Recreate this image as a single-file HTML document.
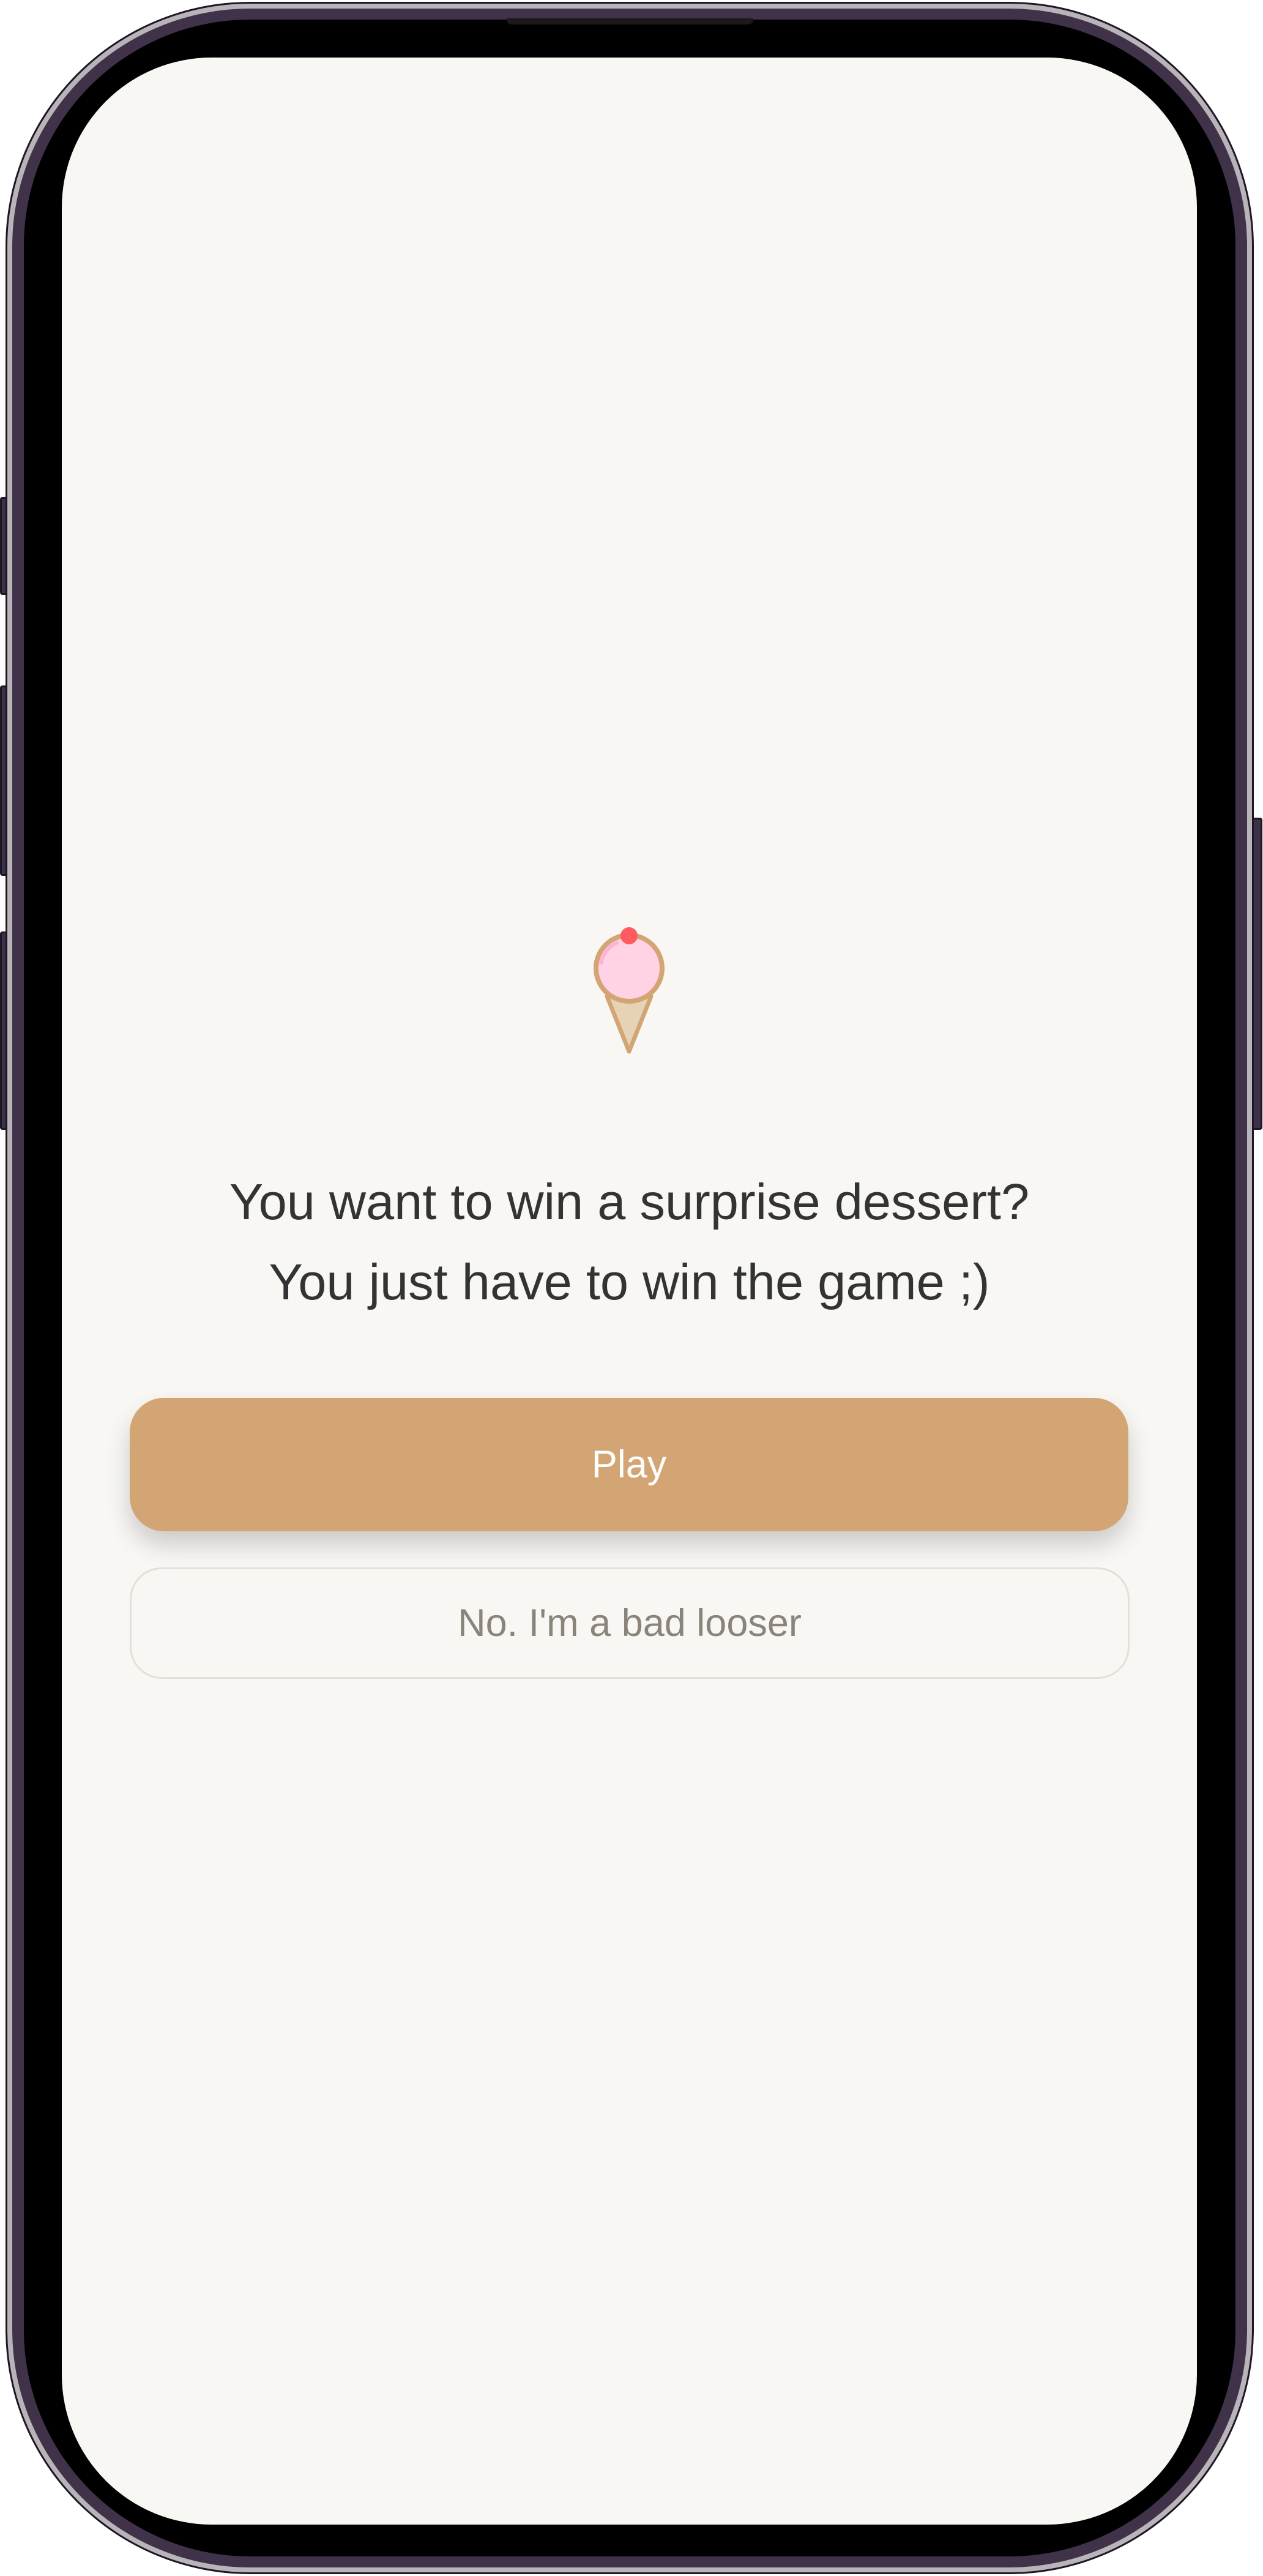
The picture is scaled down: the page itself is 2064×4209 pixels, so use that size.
<!DOCTYPE html>
<html><head><meta charset="utf-8"><style>
html,body{margin:0;padding:0;background:#fff;}
body{width:2064px;height:4209px;position:relative;overflow:hidden;font-family:"Liberation Sans",Arial,sans-serif;}
.btn{position:absolute;background:#3d3148;border:3px solid #1e1626;border-radius:4px;}
.frame{position:absolute;left:9px;top:3px;width:2040px;height:4203px;border-radius:400px;background:#1e1626;}
.hl{position:absolute;left:12px;top:6px;width:2034px;height:4197px;border-radius:397px;background:#b8b4b8;}
.pur{position:absolute;left:20px;top:14px;width:2018px;height:4181px;border-radius:389px;background:#3f3249;}
.bezel{position:absolute;left:39px;top:32px;width:1980px;height:4145px;border-radius:370px;background:#000;}
.screen{position:absolute;left:101px;top:94px;width:1855px;height:4031px;border-radius:245px;background:#f8f7f4;overflow:hidden;}
.notch{position:absolute;left:828px;top:30px;width:403px;height:10px;background:#1a1a1a;border-radius:0 0 8px 8px;}
.t{position:absolute;left:0;width:1855px;text-align:center;color:#333;font-size:83px;}
.play{position:absolute;left:111px;top:2190px;width:1632px;height:218px;border-radius:56px;background:#d4a574;box-shadow:0 22px 40px rgba(0,0,0,0.18);color:#fff;font-size:63px;text-align:center;line-height:218px;}
.no{position:absolute;left:111px;top:2467px;width:1628px;height:176px;border-radius:52px;border:3px solid #e3e0db;background:#f8f7f4;color:#8a847a;font-size:63px;text-align:center;line-height:176px;}
</style></head><body>
<div class="btn" style="left:0;top:812px;width:8px;height:154px"></div>
<div class="btn" style="left:0;top:1120px;width:8px;height:305px"></div>
<div class="btn" style="left:0;top:1522px;width:8px;height:318px"></div>
<div class="btn" style="left:2045px;top:1336px;width:12px;height:504px"></div>
<div class="frame"></div><div class="hl"></div><div class="pur"></div><div class="bezel"></div>
<div class="notch"></div>
<div class="screen">
<svg style="position:absolute;left:827px;top:1400px" width="200" height="240" viewBox="827 1400 200 240">
<path d="M891 1534 L927 1624 L963 1534 Z" fill="#e6d2b5" stroke="#d4a574" stroke-width="7" stroke-linejoin="round"/>
<circle cx="927" cy="1488" r="54" fill="#ffd3e5" stroke="#d4a574" stroke-width="8"/>
<path d="M881 1482 A46 46 0 0 1 910 1445" fill="none" stroke="#ffb3d5" stroke-width="6"/>
<circle cx="927" cy="1435" r="14" fill="#ff5a5f"/>
</svg>
<div class="t" style="top:1822px">You want to win a surprise dessert?</div>
<div class="t" style="top:1953px">You just have to win the game ;)</div>
<div class="play">Play</div>
<div class="no">No. I'm a bad looser</div>
</div>
</body></html>
